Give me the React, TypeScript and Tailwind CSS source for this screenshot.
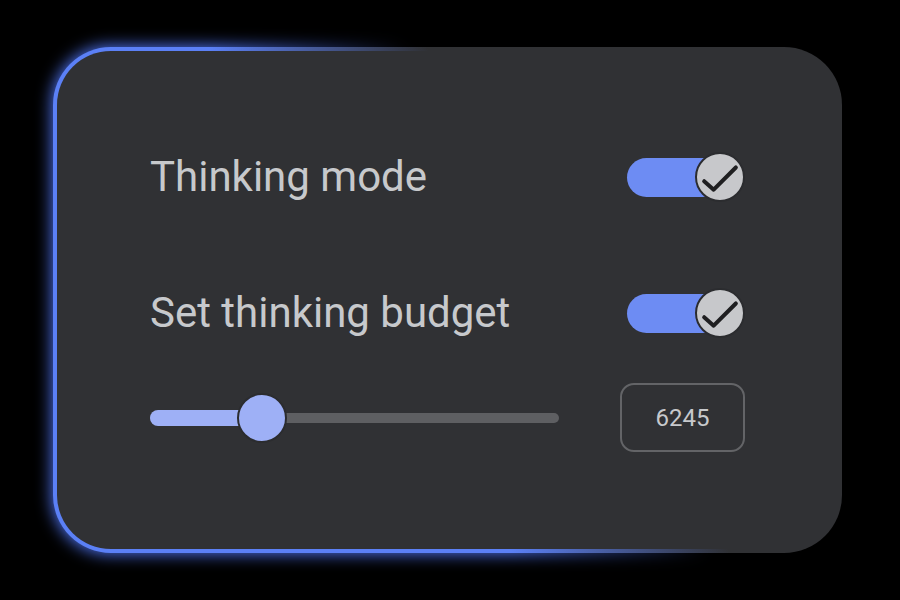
function Check() {
  return (
    <svg width="38" height="38" viewBox="0 0 36 36" fill="none">
      <path d="M3 22 L12 30 L33 9" stroke="#1f1f21" strokeWidth="3.8" strokeLinecap="round" strokeLinejoin="round" />
    </svg>
  );
}

function Toggle() {
  return (
    <div className="relative flex h-[50px] w-[118px] items-center">
      <div className="h-[39px] w-[95px] rounded-full bg-[#6d8cf3]" />
      <div className="absolute right-0 top-0 flex h-[50px] w-[50px] items-center justify-center rounded-full border-2 border-[#2b2c2f] bg-[#c7c8cb]">
        <Check />
      </div>
    </div>
  );
}

function Slider() {
  return (
    <div className="relative h-[50px] w-[409px]">
      <div className="absolute left-0 right-0 top-1/2 h-[10px] -translate-y-1/2 rounded-full bg-[#5e5f62]" />
      <div className="absolute left-0 top-1/2 h-[16px] w-[120px] -translate-y-1/2 rounded-full bg-[#9eb0f6]" />
      <div className="absolute left-[87px] top-0 h-[50px] w-[50px] rounded-full border-2 border-[#2b2c2f] bg-[#9eb0f6]" />
    </div>
  );
}

export default function App() {
  return (
    <div className="min-h-screen w-full bg-black pl-[53px] pt-[47px] font-['Roboto',sans-serif]">
      <div className="relative h-[506px] w-[789px]">
        {/* glow */}
        <div className="absolute -inset-[1px] rounded-[58px] bg-[linear-gradient(59deg,#4f74f2_42%,transparent_60%)] blur-[8px]" />
        <div className="relative flex h-full flex-col rounded-[58px] border-4 border-transparent pl-[93px] pr-[93px] pt-[101px] [background:linear-gradient(#303134,#303134)_padding-box,linear-gradient(59deg,#5b80f6_42%,#303134_62%)_border-box]">
          <div className="flex h-[50px] items-center justify-between">
            <span className="text-[42px] leading-none text-[#c7c9cc]">Thinking mode</span>
            <Toggle />
          </div>
          <div className="mt-[86px] flex h-[50px] items-center justify-between">
            <span className="text-[42px] leading-none text-[#c7c9cc]">Set thinking budget</span>
            <Toggle />
          </div>
          <div className="mt-[45px] flex h-[69px] items-center justify-between">
            <Slider />
            <div className="flex h-[69px] w-[125px] items-center justify-center rounded-[14px] border-2 border-[#636467] text-[24px] text-[#c7c9cc]">
              6245
            </div>
          </div>
        </div>
      </div>
    </div>
  );
}
